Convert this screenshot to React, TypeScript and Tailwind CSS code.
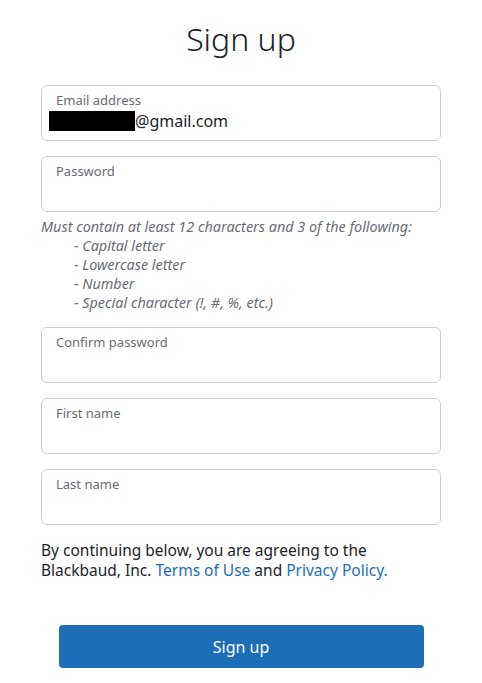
import React from 'react';

const Field = ({ label, value }: { label: string; value?: React.ReactNode }) => (
  <div className="h-[56px] w-full rounded-[6px] border border-[#cdcfd2] bg-white px-[14px] pt-[6px]">
    <div className="text-[13px] leading-[17px] text-[#686c73]">{label}</div>
    {value && <div className="-ml-[7px] mt-[1px] flex items-center text-[16px] leading-[22px] text-[#212327]">{value}</div>}
  </div>
);

const App = () => {
  const rules = ['Capital letter', 'Lowercase letter', 'Number', 'Special character (!, #, %, etc.)'];

  return (
    <div className="min-h-screen bg-white font-['Noto_Sans',sans-serif]">
      <div className="mx-auto w-[400px] pt-[17px]">
        <h1 className="text-center text-[32px] font-light leading-[44px] text-[#212327]">Sign up</h1>

        <div className="mt-[24px] flex flex-col">
          <Field
            label="Email address"
            value={
              <>
                <span className="inline-block h-[20px] w-[86px] bg-black" />
                <span>@gmail.com</span>
              </>
            }
          />
          <div className="mt-[15px]">
            <Field label="Password" />
          </div>
          <div className="mt-[5px] text-[14.4px] italic leading-[19px] text-[#686c73]">
            <p>Must contain at least 12 characters and 3 of the following:</p>
            <ul className="pl-[33px]">
              {rules.map((r) => (
                <li key={r}>- {r}</li>
              ))}
            </ul>
          </div>
          <div className="mt-[15px] flex flex-col gap-[15px]">
            <Field label="Confirm password" />
            <Field label="First name" />
            <Field label="Last name" />
          </div>
        </div>

        <p className="mt-[15px] text-[15.5px] leading-[20px] text-[#212327]">
          By continuing below, you are agreeing to the
          <br />
          Blackbaud, Inc. <a href="#" className="text-[#1870b8]">Terms of Use</a> and{' '}
          <a href="#" className="text-[#1870b8]">Privacy Policy.</a>
        </p>

        <div className="mt-[45px] flex justify-center">
          <button className="h-[43px] w-[365px] rounded-[4px] bg-[#1c6fb7] text-[16px] text-white">Sign up</button>
        </div>
      </div>
    </div>
  );
};

export default App;
